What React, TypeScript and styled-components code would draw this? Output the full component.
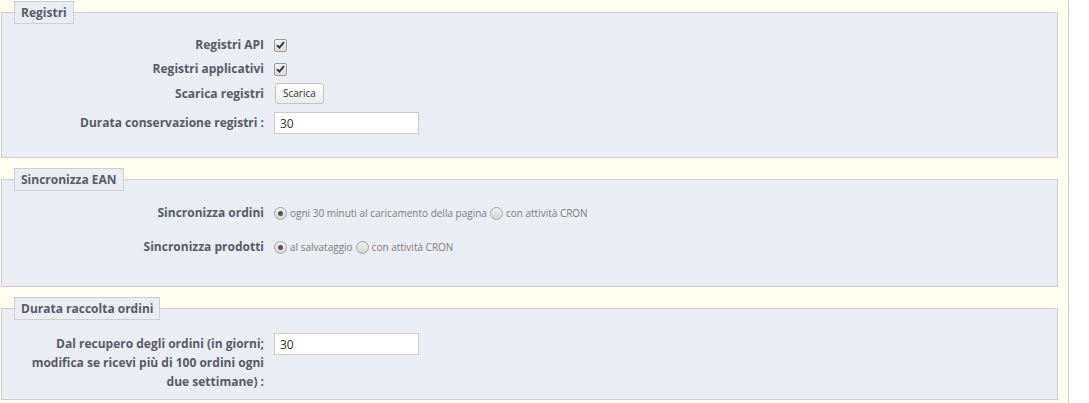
import React from "react";
import styled, { createGlobalStyle } from "styled-components";

const GlobalStyle = createGlobalStyle`
  html, body { margin: 0; padding: 0; background: #ffffff; }
  body { font-family: "Open Sans", "DejaVu Sans", sans-serif; }
  * { box-sizing: border-box; }
`;

const Page = styled.div`
  width: 1069px;
  min-height: 403px;
  background: #fffff0;
  border-right: 1px solid #cccccc;
  padding: 1px 10px 0 1px;
`;

const Fieldset = styled.fieldset<{ $pad: string }>`
  margin: 0 0 10px 0;
  padding: ${(p) => p.$pad};
  border: 1px solid #cccdd5;
  background: #ebedf4;
  min-width: 0;
`;

const Legend = styled.legend`
  padding: 0 6px;
  border: 1px solid #cccdd5;
  background: #ebedf4;
  color: #585a69;
  font-size: 12px;
  font-weight: 700;
  line-height: 21px;
`;

const Row = styled.div<{ $h: number; $top?: boolean }>`
  display: flex;
  align-items: ${(p) => (p.$top ? "flex-start" : "center")};
  height: ${(p) => p.$h}px;
`;

const Label = styled.label<{ $multi?: boolean }>`
  width: 250px;
  flex: none;
  padding-right: 0;
  text-align: right;
  color: #585a69;
  font-size: 12px;
  font-weight: 700;
  line-height: ${(p) => (p.$multi ? "19px" : "18px")};
  margin-top: ${(p) => (p.$multi ? "1px" : "0")};
`;

const Field = styled.div`
  display: flex;
  align-items: center;
  margin-left: 10px;
`;

const CheckBox = styled.span`
  display: inline-flex;
  align-items: center;
  justify-content: center;
  width: 13px;
  height: 13px;
  border: 1px solid #9c9c9c;
  border-radius: 2px;
  background: linear-gradient(#f2f2f2, #d9d9d9);
  color: #333;
`;

const Radio = styled.span<{ $on?: boolean }>`
  display: inline-flex;
  align-items: center;
  justify-content: center;
  width: 13px;
  height: 13px;
  flex: none;
  border: 1px solid #a6a6a6;
  border-radius: 50%;
  background: linear-gradient(#f0f0f0, #d6d6d6);
  margin-right: 3px;
  &::after {
    content: "";
    display: ${(p) => (p.$on ? "block" : "none")};
    width: 5px;
    height: 5px;
    border-radius: 50%;
    background: #555;
  }
`;

const RadioText = styled.span`
  font-size: 10px;
  color: #7b7b7b;
  margin-right: 3px;
  line-height: 13px;
`;

const Button = styled.button`
  height: 21px;
  padding: 0 7px;
  margin-left: 1px;
  border: 1px solid #c3c3c3;
  border-radius: 3px;
  background: linear-gradient(#ffffff, #ececec);
  color: #333;
  font-family: "Open Sans", sans-serif;
  font-size: 10px;
  line-height: 19px;
`;

const TextInput = styled.input`
  width: 145px;
  height: 22px;
  border: 1px solid #cccccc;
  background: #fff;
  padding: 0 5px;
  font-family: "Open Sans", sans-serif;
  font-size: 12px;
  color: #333;
  outline: none;
`;

const Check = () => (
  <CheckBox>
    <svg width="9" height="8" viewBox="0 0 9 8">
      <path d="M1 4.2 L3.4 6.6 L8 1.2" fill="none" stroke="#2e2e2e" strokeWidth="1.8" />
    </svg>
  </CheckBox>
);

export default function App() {
  return (
    <>
      <GlobalStyle />
      <Page>
        <Fieldset $pad="9px 12px 17px 12px">
          <Legend>Registri</Legend>
          <Row $h={24}>
            <Label>Registri API</Label>
            <Field>
              <Check />
            </Field>
          </Row>
          <Row $h={24}>
            <Label>Registri applicativi</Label>
            <Field>
              <Check />
            </Field>
          </Row>
          <Row $h={25}>
            <Label>Scarica registri</Label>
            <Field>
              <Button>Scarica</Button>
            </Field>
          </Row>
          <Row $h={34}>
            <Label>Durata conservazione registri :</Label>
            <Field>
              <TextInput defaultValue="30" />
            </Field>
          </Row>
        </Fieldset>

        <Fieldset $pad="5px 12px 22px 12px">
          <Legend>Sincronizza EAN</Legend>
          <Row $h={34}>
            <Label>Sincronizza ordini</Label>
            <Field>
              <Radio $on />
              <RadioText>ogni 30 minuti al caricamento della pagina</RadioText>
              <Radio />
              <RadioText>con attività CRON</RadioText>
            </Field>
          </Row>
          <Row $h={34}>
            <Label>Sincronizza prodotti</Label>
            <Field>
              <Radio $on />
              <RadioText>al salvataggio</RadioText>
              <Radio />
              <RadioText>con attività CRON</RadioText>
            </Field>
          </Row>
        </Fieldset>

        <Fieldset $pad="13px 12px 8px 12px">
          <Legend>Durata raccolta ordini</Legend>
          <Row $h={58} $top>
            <Label $multi>
              Dal recupero degli ordini (in giorni; modifica se ricevi più di 100 ordini ogni due settimane) :
            </Label>
            <Field>
              <TextInput defaultValue="30" />
            </Field>
          </Row>
        </Fieldset>
      </Page>
    </>
  );
}
